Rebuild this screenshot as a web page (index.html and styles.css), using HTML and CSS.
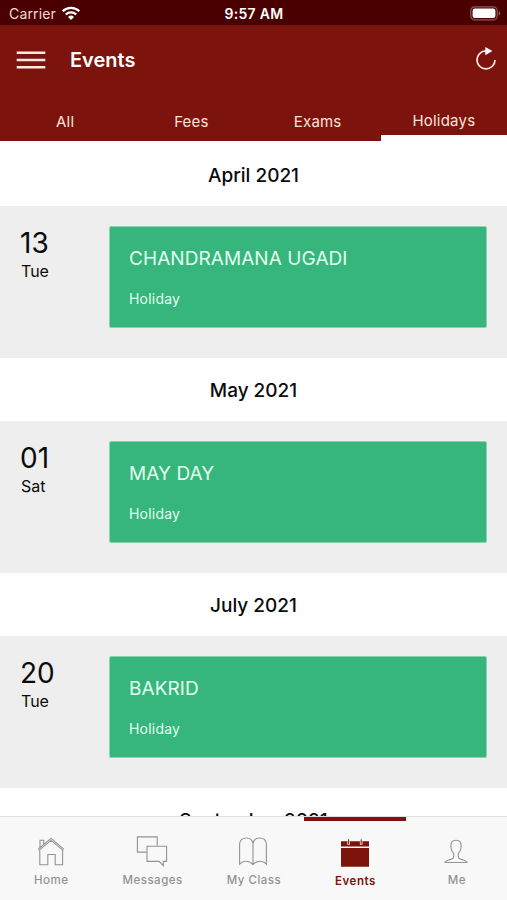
FILE: index.html
```html
<!DOCTYPE html>
<html lang="en">
<head>
<meta charset="utf-8">
<title>Events</title>
<link rel="stylesheet" href="styles.css">
</head>
<body>
<div class="app">
  <div class="status">
    <div class="carrier"><span>Carrier</span>
      <svg class="wifi" width="18" height="14" viewBox="0 0 18 14"><g fill="none" stroke="#fff" stroke-width="2.3"><path d="M.8 5.2a11.7 11.7 0 0 1 16.4 0"/><path d="M3.8 8.5a7.4 7.4 0 0 1 10.4 0"/></g><path d="M6 10.9a4.4 4.4 0 0 1 6 0L9 13.9z" fill="#fff"/></svg>
    </div>
    <div class="time">9:57 AM</div>
    <svg class="battery" width="31" height="15" viewBox="0 0 31 15"><rect x=".8" y=".8" width="26.4" height="13" rx="3.8" fill="none" stroke="#8d5a5a" stroke-width="1.2"/><rect x="2.6" y="2.6" width="22.8" height="9.4" rx="2.2" fill="#fff"/><path d="M28.7 5v4.6c1-.4 1.6-1.2 1.6-2.3s-.6-1.9-1.6-2.3z" fill="#8d5a5a"/></svg>
  </div>
  <header class="header">
    <div class="titlebar">
      <svg width="30" height="18" viewBox="0 0 30 18"><path d="M.7 1.7h28.6M.7 9h28.6M.7 16.2h28.6" stroke="#ffe9e5" stroke-width="2.4"/></svg>
      <h1 class="title">Events</h1>
      <svg class="refresh" width="22" height="24" viewBox="0 0 22 24"><path d="M11 3.9A9 9 0 1 0 20 12.9" fill="none" stroke="#ffe9e5" stroke-width="1.7"/><path d="M10.3 0v8.2L17.4 4z" fill="#fff"/></svg>
    </div>
    <nav class="tabs">
      <div class="tab">All</div>
      <div class="tab">Fees</div>
      <div class="tab">Exams</div>
      <div class="tab tab-active">Holidays</div>
    </nav>
  </header>
  <main class="list">
    <h2 class="month month-first">April 2021</h2>
    <section class="row">
      <div class="date"><div class="day">13</div><div class="weekday">Tue</div></div>
      <article class="card"><div class="name">CHANDRAMANA UGADI</div><div class="kind">Holiday</div></article>
    </section>
    <h2 class="month">May 2021</h2>
    <section class="row">
      <div class="date"><div class="day">01</div><div class="weekday">Sat</div></div>
      <article class="card"><div class="name">MAY DAY</div><div class="kind">Holiday</div></article>
    </section>
    <h2 class="month">July 2021</h2>
    <section class="row">
      <div class="date"><div class="day">20</div><div class="weekday">Tue</div></div>
      <article class="card"><div class="name">BAKRID</div><div class="kind">Holiday</div></article>
    </section>
    <h2 class="month">September 2021</h2>
  </main>
  <nav class="bottom">
    <div class="item">
      <svg width="34" height="34" viewBox="0 0 34 34"><path d="M5.8 16.6v14.1h8V20.5h7.4v10.2h7.4V16.6M4.2 15.2 17 4.4 29.9 15.2M4.6 16.7 17 6.4 29.4 16.7M6 13.4V6.3h3.8v3.9"/></svg>
      <span>Home</span>
    </div>
    <div class="item">
      <svg width="34" height="34" viewBox="0 0 34 34"><path d="M11.3 18.1H2.4V2.9h19.8v8.6M12 12.2h19.6v15.2h-3.3v4.2l-4.2-4.2H12z"/></svg>
      <span>Messages</span>
    </div>
    <div class="item">
      <svg width="34" height="34" viewBox="0 0 34 34"><path d="M17 30.6V9.7C16.4 5.9 13.5 4 10.3 4S4.1 6 3.6 9.7v20.4c3.4-3.8 9.6-3.8 13.4.5 3.8-4.3 10-4.3 13.4-.5V9.7C29.9 6 26.9 4 23.7 4S17.6 5.9 17 9.7"/></svg>
      <span>My Class</span>
    </div>
    <div class="item item-active">
      <svg width="34" height="34" viewBox="0 0 34 34"><path class="solid" d="M3 6.2h28v5.4H3zM3 13h28v18.8H3z"/><path class="cut" d="M10.6 6.2v3.6M23.2 6.2v3.6"/><path class="ring" d="M10.6 4.3v5M23.2 4.3v5"/></svg>
      <span>Events</span>
    </div>
    <div class="item">
      <svg width="34" height="34" viewBox="0 0 34 34"><path d="M17 6.2c-3.5 0-5.2 2.4-5.2 5.8 0 3.2 1.1 5.4 2.5 7.1.8 1.1.8 4.4-.7 5.4-1.8 1.1-6.4 1.3-7.6 4h22c-1.2-2.7-5.8-2.9-7.6-4-1.5-1-1.5-4.3-.7-5.4 1.4-1.7 2.5-3.9 2.5-7.1 0-3.4-1.7-5.8-5.2-5.8z"/></svg>
      <span>Me</span>
    </div>
  </nav>
</div>
</body>
</html>
```
FILE: styles.css
```css
* { box-sizing: border-box; }
body { margin: 0; font-family: Inter, "Liberation Sans", sans-serif; color: #0b0b0b; }
h1, h2 { margin: 0; }
svg { display: block; flex: none; }
.app { width: 507px; height: 900px; display: flex; flex-direction: column; overflow: hidden; background: #fff; }

.status { flex: none; height: 25px; padding: 2px 6px 0 9px; display: grid; grid-template-columns: 1fr auto 1fr; align-items: center; background: #4b0000; color: #fff; }
.carrier { display: flex; align-items: center; gap: 6px; font-size: 14px; line-height: 20px; letter-spacing: 0.15px; color: #f5dcd8; }
.wifi { margin-top: -2px; }
.time { font-size: 14px; font-weight: 600; letter-spacing: 0.3px; padding-right: 2px; }
.battery { justify-self: end; margin-top: -1px; }

.header { flex: none; height: 116px; display: flex; flex-direction: column; justify-content: space-between; background: #7c130c; color: #fff; }
.titlebar { height: 70px; padding: 0 10px 0 16px; display: flex; align-items: center; }
.title { flex: 1; margin: -1px 0 0 24px; font-size: 20px; line-height: 24px; font-weight: 600; }
.refresh { margin-top: -3px; }
.tabs { display: flex; height: 40px; padding-left: 2px; }
.tab { flex: 1; text-align: center; font-size: 15px; line-height: 42px; letter-spacing: 0.2px; color: #ffe3dd; }
.tab-active { line-height: 39px; border-bottom: 6px solid #fff; }

.list { flex: 1; min-height: 0; overflow: hidden; }
.month { height: 63px; text-align: center; font-size: 19px; line-height: 66px; font-weight: 500; }
.month-first { height: 65px; line-height: 69px; }
.row { height: 152px; padding: 20px 20px 0 20px; display: flex; align-items: flex-start; background: #eee; }
.date { width: 89px; padding-top: 1px; }
.day { font-size: 28px; line-height: 32px; }
.weekday { padding-left: 1px; font-size: 16px; line-height: 24px; }
.card { flex: 1; height: 102px; padding: 20px 19px 0; background: #36b67c; border: 1px solid #8ad3b1; border-radius: 2px; color: #e2ffef; }
.name { font-size: 19px; line-height: 24px; letter-spacing: 0.07px; }
.kind { margin-top: 18px; font-size: 14px; line-height: 20px; letter-spacing: 0.2px; }

.bottom { flex: none; height: 84px; border-top: 1px solid #dedede; display: grid; grid-template-columns: repeat(5, 1fr); background: #f8f8f8; }
.item { position: relative; display: flex; flex-direction: column; align-items: center; padding-top: 17px; font-size: 11.5px; line-height: 16px; font-weight: 500; letter-spacing: 0.5px; color: #929292; }
.item span { padding-left: 1px; }
.item svg { fill: none; stroke: #929292; stroke-width: 1.1; margin-bottom: 4px; }
.item-active { color: #7c130c; font-weight: 600; padding-top: 18px; }
.item-active::before { content: ""; position: absolute; top: 0; left: 0; right: 0; height: 4px; background: #7c130c; }
.item .solid { fill: #7c130c; stroke: none; }
.item .cut { stroke: #f8f8f8; stroke-width: 2.6; }
.item .ring { stroke: #7c130c; stroke-width: 1; }
```
